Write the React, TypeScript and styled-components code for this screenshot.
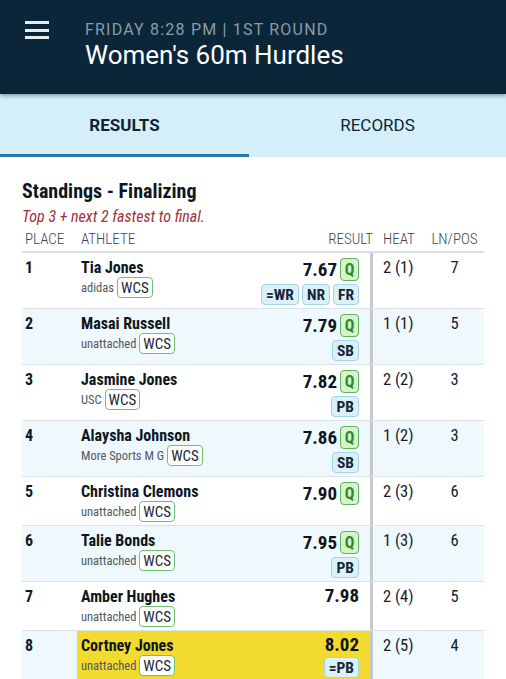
import React from 'react';
import styled, { createGlobalStyle } from 'styled-components';

const GlobalStyle = createGlobalStyle`
  html, body {
    margin: 0;
    padding: 0;
    background: #ffffff;
  }
  body {
    font-family: "Roboto Condensed", "Liberation Sans Narrow", "DejaVu Sans Condensed", Roboto, sans-serif;
    color: #111a24;
    overflow: hidden;
  }
`;

const Page = styled.div`
  width: 506px;
  height: 679px;
  overflow: hidden;
`;

const Header = styled.header`
  position: relative;
  z-index: 2;
  height: 94px;
  background: #0b2639;
  display: flex;
  align-items: flex-start;
  box-shadow: 0 2px 4px rgba(0, 0, 0, 0.35);
`;

const Burger = styled.button`
  margin: 21px 0 0 25px;
  width: 24px;
  height: 18px;
  padding: 0;
  border: none;
  background: transparent;
  display: flex;
  flex-direction: column;
  justify-content: space-between;
  span {
    display: block;
    height: 3px;
    background: #e6edf2;
  }
`;

const HeaderText = styled.div`
  margin: 20px 0 0 36px;
  display: flex;
  flex-direction: column;
  font-family: Roboto, sans-serif;
`;

const Overline = styled.div`
  font-size: 16px;
  letter-spacing: 1.2px;
  color: #8c9ba8;
  line-height: 20px;
`;

const Title = styled.h1`
  margin: 0;
  font-size: 26px;
  font-weight: 400;
  color: #ffffff;
  line-height: 30px;
`;

const Tabs = styled.nav`
  height: 63px;
  background: #d4eff9;
  display: grid;
  grid-template-columns: 249px 1fr;
`;

const Tab = styled.div<{ $active?: boolean }>`
  display: flex;
  align-items: center;
  justify-content: center;
  font-family: Roboto, sans-serif;
  font-size: 17px;
  font-weight: ${p => (p.$active ? 700 : 400)};
  color: #0e2434;
  border-bottom: 3px solid ${p => (p.$active ? '#2a73a8' : 'transparent')};
  padding-top: 2px;
`;

const Body = styled.section`
  padding: 22px 22px 0 22px;
`;

const Heading = styled.h2`
  margin: 0;
  font-size: 20px;
  font-weight: 700;
  line-height: 24px;
  color: #0d1620;
`;

const Note = styled.div`
  margin-top: 5px;
  font-size: 16px;
  font-style: italic;
  color: #a3303d;
  line-height: 18px;
`;

const Grid = `
  display: grid;
  grid-template-columns: 55px 293px 3px 52px 59px;
`;

const HeadRow = styled.div`
  ${Grid}
  margin-top: 1px;
  height: 24px;
  align-items: center;
  font-size: 15px;
  font-weight: 300;
  color: #3c4650;
  border-bottom: 2px solid #dcdfe2;
`;

const HeadCell = styled.div<{ $align?: string; $pad?: number }>`
  text-align: ${p => p.$align || 'left'};
  padding-left: ${p => p.$pad ?? 0}px;
`;

const HeadSplit = styled.div`
  grid-column: span 2;
  display: flex;
  justify-content: space-between;
  padding-left: 4px;
`;

const Row = styled.div<{ $shade: boolean }>`
  ${Grid}
  background: ${p => (p.$shade ? '#eff8fd' : '#ffffff')};
  border-bottom: 1px solid #dbe3e8;
`;

const Place = styled.div`
  padding: 5px 0 0 3px;
  font-size: 16px;
  font-weight: 700;
  line-height: 19px;
`;

const Main = styled.div<{ $highlight: boolean }>`
  display: flex;
  justify-content: space-between;
  padding: 4px 11px 3px 4px;
  background: ${p => (p.$highlight ? '#f2da2e' : 'transparent')};
`;

const Athlete = styled.div`
  display: flex;
  flex-direction: column;
`;

const Name = styled.div`
  padding-top: 1px;
  font-size: 16px;
  font-weight: 700;
  line-height: 19px;
  color: #0d1620;
`;

const Club = styled.div`
  display: flex;
  align-items: center;
  gap: 3px;
  font-size: 12.5px;
  color: #505860;
`;

const Tag = styled.span`
  display: inline-flex;
  align-items: center;
  height: 19px;
  padding: 0 3px;
  border: 1.5px solid #6fc16f;
  border-radius: 4px;
  background: #ffffff;
  font-size: 15px;
  color: #1a2638;
`;

const Result = styled.div`
  display: flex;
  flex-direction: column;
  align-items: flex-end;
  gap: 3px;
`;

const Time = styled.div<{ $tall: boolean }>`
  display: flex;
  align-items: center;
  gap: 3px;
  height: ${p => (p.$tall ? 24 : 19)}px;
  font-size: 19px;
  font-weight: 700;
  color: #0d1620;
`;

const Q = styled.span`
  display: inline-flex;
  align-items: center;
  justify-content: center;
  width: 17px;
  height: 21px;
  border: 1.5px solid #5db45d;
  border-radius: 4px;
  background: #d8f2cc;
  color: #2b8c2b;
  font-size: 16px;
  font-weight: 700;
`;

const Records = styled.div`
  display: flex;
  gap: 3px;
`;

const Rec = styled.span`
  display: inline-flex;
  align-items: center;
  height: 19px;
  padding: 0 4px;
  border: 1.5px solid #a3d3e6;
  border-radius: 4px;
  background: #dcf0f8;
  font-size: 15.5px;
  font-weight: 700;
  color: #15253a;
`;

const Divider = styled.div`
  background: #c6c8ca;
`;

const Cell = styled.div<{ $align?: string; $pad?: number }>`
  padding: 5px 0 0 ${p => p.$pad ?? 0}px;
  font-size: 16.5px;
  line-height: 20px;
  text-align: ${p => p.$align || 'left'};
  color: #14202c;
`;

type Entry = {
  place: number;
  name: string;
  club: string;
  time: string;
  q: boolean;
  records: string[];
  heat: string;
  lane: number;
  highlight?: boolean;
};

const entries: Entry[] = [
  { place: 1, name: 'Tia Jones', club: 'adidas', time: '7.67', q: true, records: ['=WR', 'NR', 'FR'], heat: '2 (1)', lane: 7 },
  { place: 2, name: 'Masai Russell', club: 'unattached', time: '7.79', q: true, records: ['SB'], heat: '1 (1)', lane: 5 },
  { place: 3, name: 'Jasmine Jones', club: 'USC', time: '7.82', q: true, records: ['PB'], heat: '2 (2)', lane: 3 },
  { place: 4, name: 'Alaysha Johnson', club: 'More Sports M G', time: '7.86', q: true, records: ['SB'], heat: '1 (2)', lane: 3 },
  { place: 5, name: 'Christina Clemons', club: 'unattached', time: '7.90', q: true, records: [], heat: '2 (3)', lane: 6 },
  { place: 6, name: 'Talie Bonds', club: 'unattached', time: '7.95', q: true, records: ['PB'], heat: '1 (3)', lane: 6 },
  { place: 7, name: 'Amber Hughes', club: 'unattached', time: '7.98', q: false, records: [], heat: '2 (4)', lane: 5 },
  { place: 8, name: 'Cortney Jones', club: 'unattached', time: '8.02', q: false, records: ['=PB'], heat: '2 (5)', lane: 4, highlight: true },
];

export default function App() {
  return (
    <Page>
      <GlobalStyle />
      <Header>
        <Burger aria-label="menu">
          <span />
          <span />
          <span />
        </Burger>
        <HeaderText>
          <Overline>FRIDAY 8:28 PM | 1ST ROUND</Overline>
          <Title>Women's 60m Hurdles</Title>
        </HeaderText>
      </Header>
      <Tabs>
        <Tab $active>RESULTS</Tab>
        <Tab>RECORDS</Tab>
      </Tabs>
      <Body>
        <Heading>Standings - Finalizing</Heading>
        <Note>Top 3 + next 2 fastest to final.</Note>
        <HeadRow>
          <HeadCell $pad={3}>PLACE</HeadCell>
          <HeadSplit>
            <span>ATHLETE</span>
            <span>RESULT</span>
          </HeadSplit>
          <HeadCell $pad={10}>HEAT</HeadCell>
          <HeadCell $align="center">LN/POS</HeadCell>
        </HeadRow>
        {entries.map((e, i) => (
          <Row key={e.place} $shade={i % 2 === 1}>
            <Place>{e.place}</Place>
            <Main $highlight={!!e.highlight}>
              <Athlete>
                <Name>{e.name}</Name>
                <Club>
                  {e.club}
                  <Tag>WCS</Tag>
                </Club>
              </Athlete>
              <Result>
                <Time $tall={e.q}>
                  <span>{e.time}</span>
                  {e.q && <Q>Q</Q>}
                </Time>
                {e.records.length > 0 && (
                  <Records>
                    {e.records.map(r => (
                      <Rec key={r}>{r}</Rec>
                    ))}
                  </Records>
                )}
              </Result>
            </Main>
            <Divider />
            <Cell $pad={10}>{e.heat}</Cell>
            <Cell $align="center">{e.lane}</Cell>
          </Row>
        ))}
      </Body>
    </Page>
  );
}
